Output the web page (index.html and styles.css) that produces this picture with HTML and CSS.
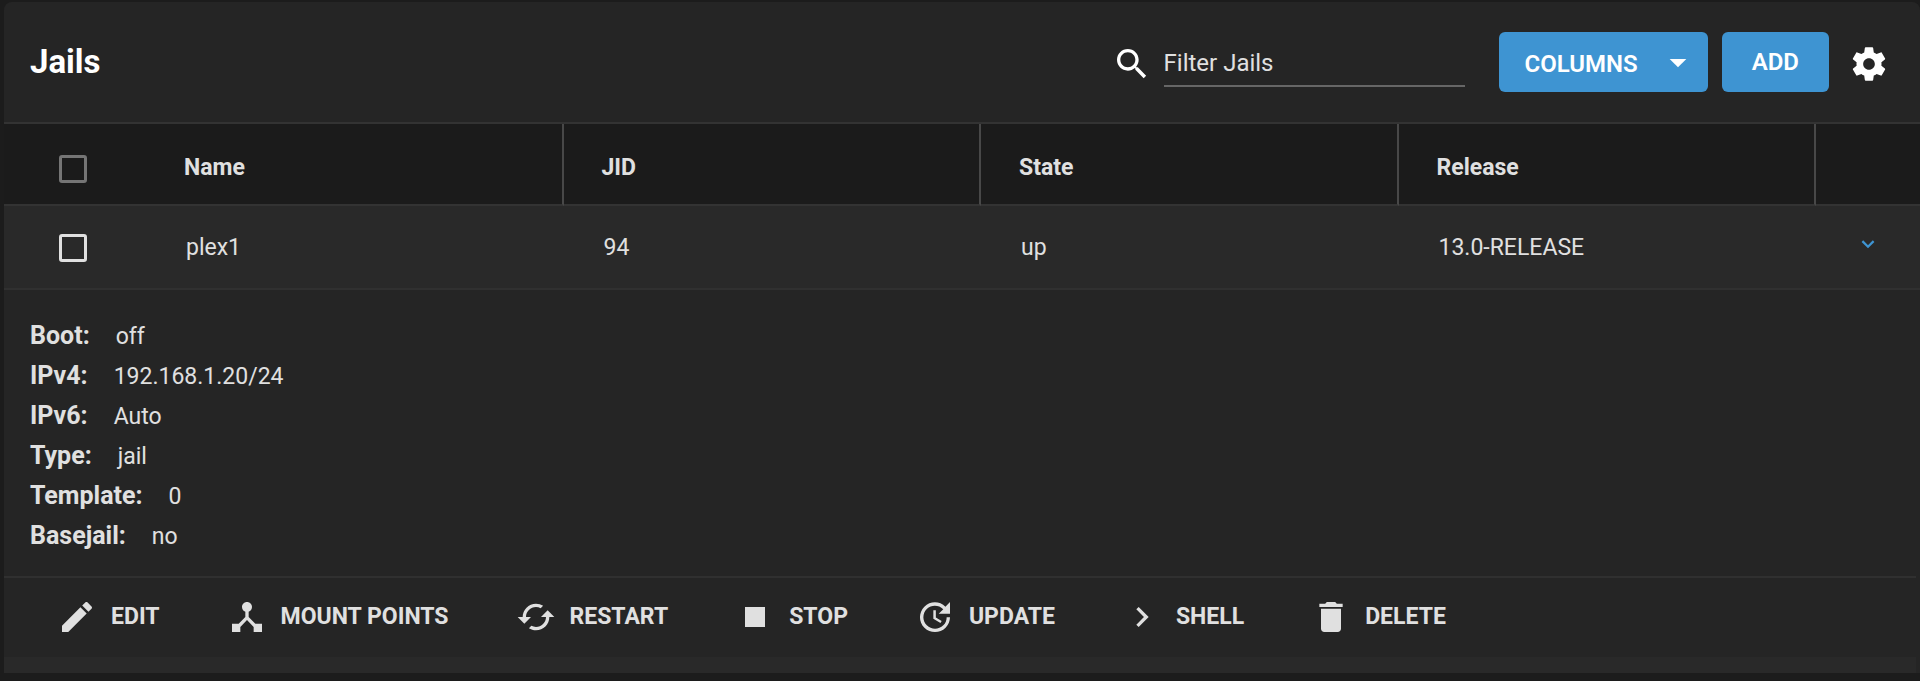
FILE: index.html
```html
<!DOCTYPE html>
<html lang="en">
<head>
  <meta charset="UTF-8" />
  <meta name="viewport" content="width=device-width, initial-scale=1.0"/>
  <title>Jails</title>
  <link rel="stylesheet" href="styles.css">
</head>
<body>
  <main class="card">
    <header class="toolbar">
      <h1>Jails</h1>
      <div class="filter">
        <label for="filter" aria-label="Filter Jails">
          <svg class="icon" viewBox="0 0 24 24"><path d="M15.5 14h-.79l-.28-.27C15.41 12.59 16 11.11 16 9.5 16 5.91 13.09 3 9.5 3S3 5.91 3 9.5 5.91 16 9.5 16c1.61 0 3.09-.59 4.23-1.57l.27.28v.79l5 4.99L20.49 19l-4.99-5zm-6 0C7.01 14 5 11.99 5 9.5S7.01 5 9.5 5 14 7.01 14 9.5 11.99 14 9.5 14z"/></svg>
        </label>
        <input id="filter" type="text" placeholder="Filter Jails">
      </div>
      <button class="btn columns-btn">COLUMNS
        <svg class="icon" viewBox="0 0 24 24"><path d="M7 9l5 5 5-5z"/></svg>
      </button>
      <button class="btn">ADD</button>
      <button class="icon-btn settings-btn" aria-label="Settings">
        <svg class="icon" viewBox="0 0 24 24"><path d="M19.43 12.98c.04-.32.07-.64.07-.98s-.03-.66-.07-.98l2.11-1.65c.19-.15.24-.42.12-.64l-2-3.46c-.12-.22-.39-.3-.61-.22l-2.49 1c-.52-.4-1.08-.73-1.69-.98l-.38-2.65C14.46 2.18 14.25 2 14 2h-4c-.25 0-.46.18-.49.42l-.38 2.65c-.61.25-1.17.59-1.69.98l-2.49-1c-.23-.09-.49 0-.61.22l-2 3.46c-.13.22-.07.49.12.64l2.11 1.65c-.04.32-.07.65-.07.98s.03.66.07.98l-2.11 1.65c-.19.15-.24.42-.12.64l2 3.46c.12.22.39.3.61.22l2.49-1c.52.4 1.08.73 1.69.98l.38 2.65c.03.24.24.42.49.42h4c.25 0 .46-.18.49-.42l.38-2.65c.61-.25 1.17-.59 1.69-.98l2.49 1c.23.09.49 0 .61-.22l2-3.46c.12-.22.07-.49-.12-.64l-2.11-1.65zM12 15.5c-1.93 0-3.5-1.57-3.5-3.5s1.57-3.5 3.5-3.5 3.5 1.57 3.5 3.5-1.57 3.5-3.5 3.5z"/></svg>
      </button>
    </header>

    <table class="jails">
      <thead>
        <tr>
          <th class="check-col"><input type="checkbox" aria-label="Select all"></th>
          <th>Name</th>
          <th>JID</th>
          <th>State</th>
          <th>Release</th>
          <th class="expand-col"></th>
        </tr>
      </thead>
      <tbody>
        <tr>
          <td class="check-col"><input type="checkbox" aria-label="Select plex1"></td>
          <td>plex1</td>
          <td>94</td>
          <td>up</td>
          <td>13.0-RELEASE</td>
          <td class="expand-col">
            <button class="icon-btn" aria-label="Collapse">
              <svg class="chevron" viewBox="0 0 12 8"><path d="M1 1l5 5 5-5"/></svg>
            </button>
          </td>
        </tr>
      </tbody>
    </table>

    <dl class="details">
      <div><dt>Boot:</dt><dd>off</dd></div>
      <div><dt>IPv4:</dt><dd>192.168.1.20/24</dd></div>
      <div><dt>IPv6:</dt><dd>Auto</dd></div>
      <div><dt>Type:</dt><dd>jail</dd></div>
      <div><dt>Template:</dt><dd>0</dd></div>
      <div><dt>Basejail:</dt><dd>no</dd></div>
    </dl>

    <footer class="actions">
      <button class="action">
        <svg class="icon" viewBox="0 0 24 24"><path d="M3 17.25V21h3.75L17.81 9.94l-3.75-3.75L3 17.25zM20.71 7.04c.39-.39.39-1.02 0-1.41l-2.34-2.34c-.39-.39-1.02-.39-1.41 0l-1.83 1.83 3.75 3.75 1.83-1.83z"/></svg>
        EDIT
      </button>
      <button class="action">
        <svg class="icon" viewBox="0 0 24 24"><path d="M17 16l-4-4V8.820C14.16 8.4 15 7.3 15 6c0-1.66-1.34-3-3-3S9 4.34 9 6c0 1.3.84 2.4 2 2.820V12l-4 4H3v5h5v-3.05l4-4.2 4 4.2V21h5v-5h-4z"/></svg>
        MOUNT POINTS
      </button>
      <button class="action">
        <svg class="icon" viewBox="0 0 24 24"><path d="M19 8l-4 4h3c0 3.31-2.69 6-6 6-1.01 0-1.97-.25-2.8-.7l-1.46 1.46C8.97 19.54 10.43 20 12 20c4.42 0 8-3.58 8-8h3l-4-4zM6 12c0-3.31 2.69-6 6-6 1.01 0 1.97.25 2.8.7l1.46-1.46C15.03 4.46 13.57 4 12 4c-4.42 0-8 3.58-8 8H1l4 4 4-4H6z"/></svg>
        RESTART
      </button>
      <button class="action">
        <svg class="icon" viewBox="0 0 24 24"><path d="M6 6h12v12H6z"/></svg>
        STOP
      </button>
      <button class="action">
        <svg class="icon" viewBox="0 0 24 24"><path d="M21 10.12h-6.78l2.74-2.82c-2.73-2.7-7.15-2.8-9.88-.1-2.73 2.71-2.73 7.08 0 9.79s7.15 2.71 9.88 0C18.32 15.65 19 14.08 19 12.1h2c0 1.98-.88 4.55-2.64 6.29-3.51 3.48-9.21 3.48-12.72 0-3.5-3.47-3.53-9.11-.02-12.58s9.14-3.47 12.65 0L21 3v7.12zM12.5 8v4.25l3.5 2.08-.72 1.21L11 13V8h1.5z"/></svg>
        UPDATE
      </button>
      <button class="action">
        <svg class="icon" viewBox="0 0 24 24"><path d="M10 6L8.59 7.41 13.17 12l-4.58 4.59L10 18l6-6z"/></svg>
        SHELL
      </button>
      <button class="action">
        <svg class="icon" viewBox="0 0 24 24"><path d="M6 19c0 1.1.9 2 2 2h8c1.1 0 2-.9 2-2V7H6v12zM19 4h-3.500l-1-1h-5l-1 1H5v2h14V4z"/></svg>
        DELETE
      </button>
    </footer>
  </main>
</body>
</html>
```
FILE: styles.css
```css
:root {
  --bg: #1c1c1c;
  --card: #252525;
  --row: #292929;
  --head: #1b1b1b;
  --line: #333333;
  --divider: #484848;
  --primary: #3e94d2;
  --text: #e0e0e0;
  --muted: #757575;
}

* {
  box-sizing: border-box;
}

body {
  margin: 0;
  padding: 2px 0 6px 4px;
  background: var(--bg);
  color: var(--text);
  font-family: Roboto, sans-serif;
  font-size: 23px;
  line-height: 40px;
}

button,
input {
  font: inherit;
  color: inherit;
}

button {
  border: none;
  background: none;
  padding: 0;
  cursor: pointer;
}

.card {
  background: var(--card);
  border-radius: 8px 8px 0 0;
}

.icon {
  display: block;
  width: 40px;
  height: 40px;
  fill: currentColor;
}

/* toolbar */
.toolbar {
  display: flex;
  align-items: center;
  height: 122px;
  padding: 0 31px 0 26px;
  border-bottom: 2px solid var(--line);
  color: #ffffff;
}

h1 {
  margin: 0 auto 0 0;
  font-size: 33px;
  font-weight: 700;
}

.filter {
  display: flex;
  align-items: center;
  gap: 12px;
  margin-right: 34px;
}

.filter label {
  padding-top: 4px;
}

.filter input {
  width: 301px;
  height: 50px;
  padding: 4px 0 0;
  border: none;
  border-bottom: 2px solid #666666;
  background: none;
  font-size: 24px;
  outline: none;
}

.filter input::placeholder {
  color: var(--text);
  opacity: 1;
}

.btn {
  height: 60px;
  margin-right: 14px;
  padding: 0 30px;
  border-radius: 6px;
  background: var(--primary);
  font-size: 24px;
  font-weight: 600;
}

.columns-btn {
  display: flex;
  align-items: center;
  gap: 20px;
  padding: 4px 10px 0 26px;
}

.settings-btn {
  padding: 4px 0 0 6px;
}

/* table */
.jails {
  width: 100%;
  table-layout: fixed;
  border-collapse: separate;
  border-spacing: 0;
}

.jails th,
.jails td {
  text-align: left;
}

.jails th {
  height: 82px;
  padding: 8px 0 0 38px;
  background: var(--head);
  border-bottom: 2px solid var(--line);
  border-right: 2px solid var(--divider);
  font-weight: 700;
}

.jails td {
  height: 84px;
  padding: 2px 0 0 40px;
  background: var(--row);
  border-bottom: 2px solid #303030;
}

.jails .check-col {
  width: 142px;
  padding-left: 55px;
  border-right: none;
}

.jails th.check-col {
  padding-top: 10px;
}

.jails .expand-col {
  width: 104px;
  padding-left: 45px;
  border-right: none;
}

.jails input {
  appearance: none;
  display: block;
  width: 28px;
  height: 28px;
  margin: 0;
  border: 3px solid var(--text);
  border-radius: 3px;
}

.jails th input {
  border-color: var(--muted);
}

.jails .icon-btn {
  display: block;
  padding-bottom: 8px;
}

.chevron {
  display: block;
  width: 14px;
  height: 9px;
  fill: none;
  stroke: var(--primary);
  stroke-width: 2;
}

/* expanded row */
.details {
  margin: 0;
  padding: 26px 26px 20px;
}

.details div {
  display: flex;
  align-items: baseline;
  gap: 26px;
  height: 40px;
}

.details dt {
  font-size: 25px;
  font-weight: 700;
}

.details dd {
  margin: 0;
}

.actions {
  display: flex;
  gap: 67px;
  margin-right: 4px;
  padding: 19px 53px 20px;
  border-top: 2px solid #303030;
  border-bottom: 16px solid var(--row);
}

.action {
  display: flex;
  align-items: center;
  gap: 14px;
  font-weight: 700;
}
```
